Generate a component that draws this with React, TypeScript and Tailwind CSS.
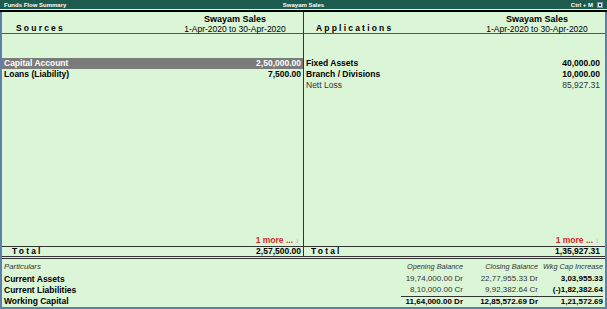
import React from 'react';

interface Row {
  label: string;
  amount: string;
  bold?: boolean;
  selected?: boolean;
}

const sources: Row[] = [
  { label: 'Capital Account', amount: '2,50,000.00', bold: true, selected: true },
  { label: 'Loans (Liability)', amount: '7,500.00', bold: true },
];

const applications: Row[] = [
  { label: 'Fixed Assets', amount: '40,000.00', bold: true },
  { label: 'Branch / Divisions', amount: '10,000.00', bold: true },
  { label: 'Nett Loss', amount: '85,927.31' },
];

const Side: React.FC<{
  title: string;
  rows: Row[];
  total: string;
  left?: boolean;
}> = ({ title, rows, total, left }) => (
  <div className={`flex flex-col ${left ? 'w-[302px] border-r border-[#333]' : 'flex-1'}`}>
    {/* Header */}
    <div className="h-[22px] flex items-end justify-between border-b border-[#555]">
      <div
        className={`font-bold tracking-[2.2px] text-[8.5px] leading-none pb-[1px] ${
          left ? 'pl-[14px]' : 'pl-[12px]'
        }`}
      >
        {title}
      </div>
      <div className="w-[112px] text-center leading-none mr-[12px]">
        <div className="font-bold text-[9px] mb-[1px]">Swayam Sales</div>
        <div className="text-[8.5px]">1-Apr-2020 to 30-Apr-2020</div>
      </div>
    </div>

    {/* Body */}
    <div className="flex-1 flex flex-col pt-[24px]">
      {rows.map((r) => (
        <div
          key={r.label}
          className={`h-[11px] flex items-center justify-between text-[8.5px] leading-none ${
            left ? 'pl-[2px] pr-[2px]' : 'pl-[2px] pr-[5px]'
          } ${r.selected ? 'bg-[#7b7b7b] text-white' : r.bold ? 'text-black' : 'text-[#333]'} ${
            r.bold ? 'font-bold' : ''
          }`}
        >
          <span>{r.label}</span>
          <span>{r.amount}</span>
        </div>
      ))}
      <div className="flex-1" />
      <div
        className={`h-[11px] flex items-center justify-end text-[8.5px] leading-none ${
          left ? 'pr-[4px]' : 'pr-[6px]'
        }`}
      >
        <span className="font-bold text-[#d42a2a]">1 more ...</span>
        <span className="text-[#9a9a9a] text-[8px] ml-[2px]">↓</span>
      </div>
    </div>

    {/* Total */}
    <div className="h-[10px] border-t-[1.5px] border-[#333] flex items-center justify-between text-[8.5px] leading-none font-bold">
      <span className={`tracking-[2.2px] ${left ? 'pl-[10px]' : 'pl-[7px]'}`}>Total</span>
      <span className={left ? 'pr-[2px]' : 'pr-[5px]'}>{total}</span>
    </div>
  </div>
);

const wcRows = [
  { label: 'Current Assets', open: '19,74,000.00 Dr', close: '22,77,955.33 Dr', inc: '3,03,955.33' },
  { label: 'Current Liabilities', open: '8,10,000.00 Cr', close: '9,92,382.64 Cr', inc: '(-)1,82,382.64' },
];

const cols = 'grid grid-cols-[1fr_62px_75px_65px] pr-[2px] items-center whitespace-nowrap';

export default function App() {
  return (
    <div
      className="w-[607px] h-[309px] overflow-hidden bg-[#dbf5d7] text-black flex flex-col"
      style={{ fontFamily: '"Liberation Sans", Arial, sans-serif' }}
    >
      {/* Title bar */}
      <div className="h-[9px] bg-[#1c5b4d] text-white text-[6px] font-bold leading-none grid grid-cols-3 items-center px-[4px]">
        <span>Funds Flow Summary</span>
        <span className="text-center">Swayam Sales</span>
        <span className="flex items-center justify-end gap-[4px]">
          <span>Ctrl + M</span>
          <span className="w-[6px] h-[6px] bg-[#dfe6f0] border border-[#7a8ea8] flex items-center justify-center">
            <span className="w-[2px] h-[2px] bg-[#334]" />
          </span>
        </span>
      </div>
      <div className="h-[1px] bg-[#dbf5d7]" />
      <div className="h-[2px] bg-black" />

      {/* Framed content */}
      <div className="flex-1 flex flex-col border-l-2 border-r-2 border-b-2 border-[#5d7fae]">
        <div className="h-[247px] flex border-b-[3px] border-double border-[#333]">
          <Side title="Sources" rows={sources} total="2,57,500.00" left />
          <Side title="Applications" rows={applications} total="1,35,927.31" />
        </div>

        {/* Working capital */}
        <div className="flex-1 pt-[2px] leading-none">
          <div className={`${cols} h-[12px] italic text-[#333] text-[7.3px]`}>
            <span className="pl-[2px] text-[7.8px]">Particulars</span>
            <span className="text-right">Opening Balance</span>
            <span className="text-right">Closing Balance</span>
            <span className="text-right">Wkg Cap Increase</span>
          </div>
          {wcRows.map((r) => (
            <div key={r.label} className={`${cols} h-[11.5px]`}>
              <span className="pl-[2px] font-bold text-[8.5px]">{r.label}</span>
              <span className="text-right text-[#333] text-[8px]">{r.open}</span>
              <span className="text-right text-[#333] text-[8px]">{r.close}</span>
              <span className="text-right font-bold text-[8px]">{r.inc}</span>
            </div>
          ))}
          <div className={`${cols} h-[11px] font-bold text-[8px]`}>
            <span className="pl-[2px] text-[8.5px]">Working Capital</span>
            <span className="border-t border-[#333] h-full flex items-center justify-end">
              11,64,000.00 Dr
            </span>
            <span className="border-t border-[#333] h-full flex items-center justify-end">
              12,85,572.69 Dr
            </span>
            <span className="border-t border-[#333] h-full flex items-center justify-end">
              1,21,572.69
            </span>
          </div>
        </div>
      </div>
    </div>
  );
}
